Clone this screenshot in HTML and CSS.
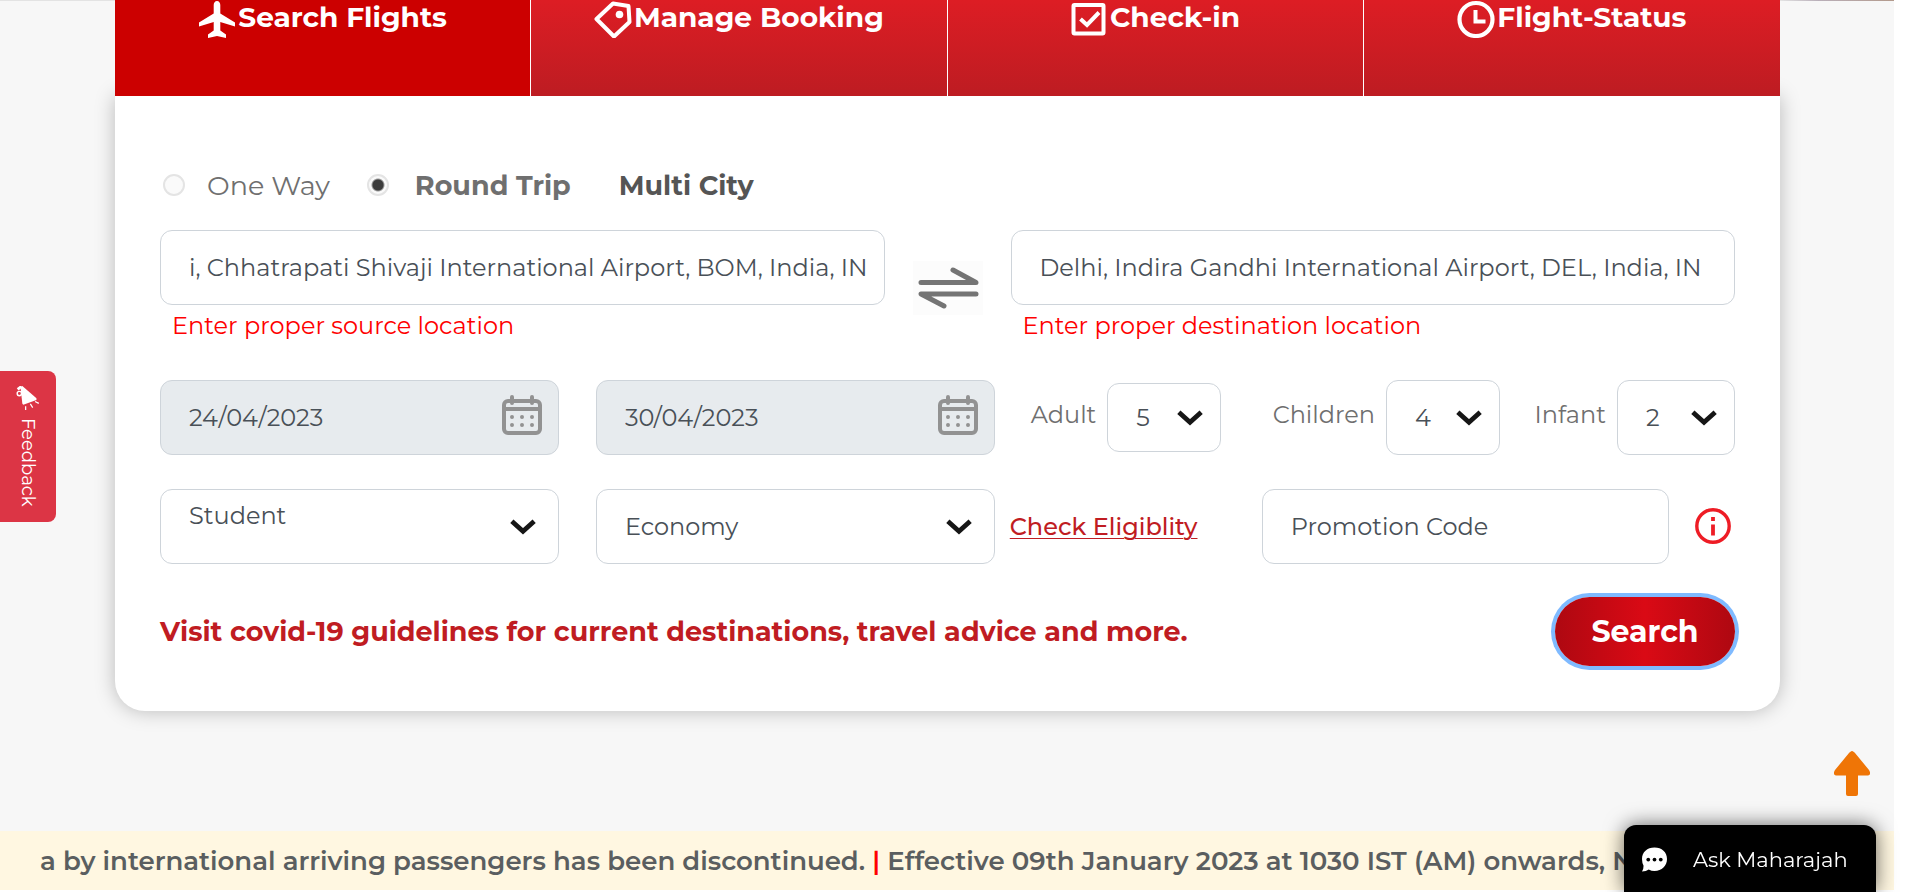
FILE: index.html
```html
<!DOCTYPE html>
<html lang="en">
<head>
<meta charset="utf-8">
<title>Flight search</title>
<link rel="stylesheet" href="styles.css">
</head>
<body>
<svg class="sprite" aria-hidden="true">
  <symbol id="chevron" viewBox="0 0 24 16"><path d="M1.500 3 12 12.500 22.500 3" fill="none" stroke="#161616" stroke-width="4.500"/></symbol>
  <symbol id="calendar" viewBox="0 0 40 40">
    <path d="M10 0v6M30 0v6" stroke="#929292" stroke-width="4" stroke-linecap="round" transform="translate(0 2)"/>
    <rect x="2" y="6" width="36" height="32" rx="4" fill="none" stroke="#929292" stroke-width="4"/>
    <path d="M2 14h36" stroke="#929292" stroke-width="4"/>
    <path d="M10 22h0M20 22h0M30 22h0M10 30h0M20 30h0M30 30h0" stroke="#929292" stroke-width="4" stroke-linecap="round"/>
  </symbol>
</svg>
<main class="page">
  <div class="hero-edge"></div>
  <div class="booking">
    <nav class="tabs">
      <button class="tab tab-active" type="button">
        <svg class="tab-icon" viewBox="0 0 38 38"><path d="M19 1c2 0 3.300 2 3.300 4v8.500L37 22.500v4L22.300 22v8.500l5.700 4V38l-9-2-9 2v-3.500l5.700-4V22L1 26.500v-4l14.700-9V5c0-2 1.300-4 3.300-4z" fill="#fff"/></svg>
        <span>Search Flights</span>
      </button>
      <button class="tab" type="button">
        <svg class="tab-icon" viewBox="0 0 38 38"><path d="M2.500 19 19 3.500l15.500 2.500 1 16L20 36.500z" fill="none" stroke="#fff" stroke-width="4" stroke-linejoin="round"/><circle cx="25.500" cy="14.500" r="3.800" fill="#fff"/></svg>
        <span>Manage Booking</span>
      </button>
      <button class="tab" type="button">
        <svg class="tab-icon" viewBox="0 0 38 38"><rect x="3.500" y="5" width="30" height="28.500" rx="1" fill="none" stroke="#fff" stroke-width="4"/><path d="M10.500 19l6.500 6 12-12.500" fill="none" stroke="#fff" stroke-width="4"/></svg>
        <span>Check-in</span>
      </button>
      <button class="tab" type="button">
        <svg class="tab-icon" viewBox="0 0 38 38"><circle cx="19" cy="19.500" r="16.500" fill="none" stroke="#fff" stroke-width="4.200"/><path d="M18.500 10v11.500h10" fill="none" stroke="#fff" stroke-width="4"/></svg>
        <span>Flight-Status</span>
      </button>
    </nav>
    <form class="card">
      <div class="trip-row">
        <input class="radio" type="radio" name="trip" id="one-way">
        <label class="trip-label" for="one-way">One Way</label>
        <input class="radio" type="radio" name="trip" id="round-trip" checked>
        <label class="trip-label trip-bold" for="round-trip">Round Trip</label>
        <a class="multi-city" href="#">Multi City</a>
      </div>
      <div class="route-row">
        <div class="route-field">
          <input class="control" type="text" aria-label="From" value="i, Chhatrapati Shivaji International Airport, BOM, India, IN">
          <p class="error">Enter proper source location</p>
        </div>
        <button class="swap" type="button" aria-label="Swap">
          <svg viewBox="0 0 70 54"><rect width="70" height="54" fill="#fcfcfc"/><path d="M8 21.500H63L40 9M63 33H8L31 45" fill="none" stroke="#747474" stroke-width="5" stroke-linecap="round" stroke-linejoin="round"/></svg>
        </button>
        <div class="route-field">
          <input class="control" type="text" aria-label="To" value="Delhi, Indira Gandhi International Airport, DEL, India, IN">
          <p class="error">Enter proper destination location</p>
        </div>
      </div>
      <div class="row">
        <div class="pair">
          <div class="field"><input class="control date" type="text" aria-label="Departure" value="24/04/2023" readonly><svg class="cal-icon"><use href="#calendar"/></svg></div>
          <div class="field"><input class="control date" type="text" aria-label="Return" value="30/04/2023" readonly><svg class="cal-icon"><use href="#calendar"/></svg></div>
        </div>
        <div class="pax">
          <div class="pax-item"><label for="adult">Adult</label><div class="field pax-field"><select class="control short" id="adult"><option>5</option></select><svg class="arrow arrow-near"><use href="#chevron"/></svg></div></div>
          <div class="pax-item"><label for="children">Children</label><div class="field pax-field"><select class="control" id="children"><option>4</option></select><svg class="arrow arrow-near"><use href="#chevron"/></svg></div></div>
          <div class="pax-item"><label for="infant">Infant</label><div class="field pax-field pax-last"><select class="control" id="infant"><option>2</option></select><svg class="arrow arrow-near"><use href="#chevron"/></svg></div></div>
        </div>
      </div>
      <div class="row class-row">
        <div class="pair">
          <div class="field"><select class="control raised" aria-label="Passenger type"><option>Student</option></select><svg class="arrow"><use href="#chevron"/></svg></div>
          <div class="field"><select class="control" aria-label="Cabin"><option>Economy</option></select><svg class="arrow"><use href="#chevron"/></svg></div>
        </div>
        <div class="promo">
          <a class="eligibility" href="#">Check Eligiblity</a>
          <input class="control" type="text" aria-label="Promotion Code" placeholder="Promotion Code">
          <svg class="info" viewBox="0 0 36 36"><circle cx="18" cy="18" r="16.200" fill="none" stroke="#ee1c25" stroke-width="3.400"/><path d="M18 16.500V27.500M18 9v4" stroke="#ee1c25" stroke-width="3.800"/></svg>
        </div>
      </div>
      <div class="submit-row">
        <a class="covid" href="#">Visit covid-19 guidelines for current destinations, travel advice and more.</a>
        <button class="search" type="button">Search</button>
      </div>
    </form>
  </div>
  <div class="ticker"><p class="ticker-text">a by international arriving passengers has been discontinued. <span class="bar">|</span> Effective 09th January 2023 at 1030 IST (AM) onwards, New</p></div>
</main>
<button class="feedback" type="button">
  <svg class="horn" viewBox="0 0 24 26"><path d="M4 1 6 0l15 13v2L7 20l-1-1z" fill="#fff"/><circle cx="2.800" cy="8" r="2.300" fill="none" stroke="#fff" stroke-width="1.500"/><path d="M1 3.500l4-3" stroke="#fff" stroke-width="3"/><path d="M19.500 16.500l4 2M14.500 19l2.500 4M9.500 21.500v4" stroke="#fff" stroke-width="1.300"/></svg>
  <span>Feedback</span>
</button>
<a class="to-top" href="#" aria-label="Back to top"><svg viewBox="0 0 36 45"><path d="M18 0c1 0 2 1 3 2l14 17c2 3 1 5-1 5.500H24V43q0 2-2 2h-8q-2 0-2-2V24.500H2C0 24-1 22 1 19L15 2c1-1 2-2 3-2z" fill="#ef7506"/></svg></a>
<button class="chat" type="button">
  <svg class="chat-icon" viewBox="0 0 24 24"><path d="M12 .500C19 .500 24 5 24 11.500S19 23 12 23q-3 0-5.500-1.500Q4 23.500 0 23.500 1.500 21.500 1.500 18 0 15 0 11.500C0 5 5 .500 12 .500z" fill="#fff"/><circle cx="6" cy="12" r="1.800"/><circle cx="12" cy="12" r="1.800"/><circle cx="18" cy="12" r="1.800"/></svg>
  <span>Ask Maharajah</span>
</button>
</body>
</html>
```

FILE: styles.css
```css
* { box-sizing: border-box; }
body {
  margin: 0;
  padding-right: 26px;
  min-height: 100vh;
  overflow: hidden;
  background: #fff;
  color: #495057;
  font-family: Montserrat, Inter, "Open Sans", sans-serif;
  font-size: 24px;
}
button, input, select { font: inherit; color: inherit; }
button { border: 0; cursor: pointer; }
p { margin: 0; }
.sprite { position: absolute; width: 0; height: 0; }
.page { background: #f7f7f7; }
.hero-edge { height: 1px; background: linear-gradient(90deg, #e3e3e3 94%, #b9afb9 96%, #b39a8c); }
.booking { margin-top: -1px; padding: 0 114px 0 115px; }

.tabs { display: grid; grid-template-columns: repeat(4, 1fr); height: 96px; }
.tab {
  display: flex;
  justify-content: center;
  align-items: flex-start;
  gap: 2px;
  padding: 0;
  border-right: 1px solid #fff;
  background: linear-gradient(#dd1d24, #bd1c22);
  color: #fff;
  font-size: 28px;
  font-weight: 700;
  line-height: 34px;
}
.tab:last-child { border-right: 0; }
.tab-active { background: #c00; }
.tab-icon { width: 38px; height: 38px; }

.card {
  padding: 68px 45px 40px;
  border-radius: 0 0 30px 30px;
  background: #fff;
  box-shadow: 0 0 20px rgba(0, 0, 0, .25);
}
.trip-row { display: flex; align-items: center; height: 42px; color: #6f6f6f; font-size: 27px; }
.radio {
  appearance: none;
  width: 22px;
  height: 22px;
  margin: 0 22px 0 3px;
  border: 2px solid #e4e4e4;
  border-radius: 50%;
  background: #fafafa;
}
.radio:checked { background: radial-gradient(circle, #3c3c3c 5px, #fafafa 7px); }
.trip-label + .radio { margin: 0 26px 0 37px; }
.trip-bold { font-weight: 700; }
.multi-city { margin-left: 48px; color: #555; font-weight: 700; text-decoration: none; }

.control {
  display: block;
  width: 100%;
  height: 75px;
  padding: 0 16px 1px 28px;
  border: 1px solid #ced4da;
  border-radius: 12px;
  background: #fff;
  color: #495057;
  outline: none;
  appearance: none;
}
.control::placeholder { color: #495057; opacity: 1; }
.date { background: #e7ebee; }
.short { height: 69px; }
.raised { padding-bottom: 22px; }
.field { position: relative; }
.cal-icon { position: absolute; right: 17px; top: 15px; width: 40px; height: 40px; }
.arrow { position: absolute; right: 23px; top: 50%; width: 26px; height: 17px; margin-top: -9px; pointer-events: none; }
.arrow-near { right: 18px; }

.route-row { display: grid; grid-template-columns: 1fr 126px 1fr; margin-top: 24px; height: 150px; }
.error { padding: 5px 12px 0; color: #f00; line-height: 32px; }
.swap { justify-self: center; align-self: start; width: 70px; height: 54px; margin-top: 31px; padding: 0; background: none; }

.row { display: grid; grid-template-columns: 53fr 47fr; align-items: center; height: 75px; }
.class-row { margin-top: 34px; }
.pair { display: grid; grid-template-columns: 1fr 1fr; gap: 37px; }
.pax { display: grid; grid-template-columns: 242fr 262fr 200fr; align-items: center; padding-left: 36px; color: #6f6f6f; }
.pax-item { display: flex; align-items: center; gap: 11px; }
.pax-item label { padding-bottom: 6px; }
.pax-field { width: 114px; }
.pax-last { width: 118px; }
.promo { display: flex; align-items: center; padding-left: 15px; }
.eligibility { flex: 0 0 252px; color: #c01c22; font-weight: 500; text-underline-offset: 3px; text-decoration-thickness: 1px; }
.promo .control { flex: 1; min-width: 0; }
.info { flex: none; width: 36px; height: 36px; margin: 0 4px 2px 26px; }

.submit-row { display: flex; justify-content: space-between; align-items: center; margin-top: 28px; height: 79px; }
.covid { color: #c01c22; font-size: 27px; font-weight: 700; text-decoration: none; }
.search {
  width: 180px;
  height: 69px;
  border-radius: 35px;
  background: linear-gradient(90deg, #ae0811, #da0a15 50%, #ae0811);
  box-shadow: 0 0 0 4px #7fbaff;
  color: #fff;
  font-size: 30px;
  font-weight: 700;
}

.ticker { margin-top: 120px; padding: 1px 40px 0; background: #fff7e1; }
.ticker-text { overflow: hidden; color: #5a5e60; font-size: 26px; font-weight: 600; line-height: 58px; white-space: nowrap; }
.bar { color: #f00; }

.feedback {
  position: fixed;
  left: 0;
  top: 371px;
  display: flex;
  align-items: center;
  gap: 8px;
  width: 56px;
  height: 151px;
  padding: 15px 0;
  border-radius: 0 8px 8px 0;
  background: #dc3545;
  color: #fff;
  font-size: 18px;
  writing-mode: vertical-rl;
}
.horn { width: 24px; height: 26px; }
.to-top { position: fixed; right: 50px; bottom: 96px; width: 36px; height: 45px; }
.chat {
  position: fixed;
  right: 44px;
  bottom: 0;
  display: flex;
  align-items: center;
  gap: 26px;
  width: 252px;
  height: 67px;
  padding: 2px 18px 0;
  border-radius: 12px 12px 0 0;
  background: #000;
  box-shadow: 0 0 20px rgba(0, 0, 0, .6);
  color: #fff;
  font-size: 21px;
  white-space: nowrap;
}
.chat-icon { flex: none; width: 25px; height: 25px; }
```
